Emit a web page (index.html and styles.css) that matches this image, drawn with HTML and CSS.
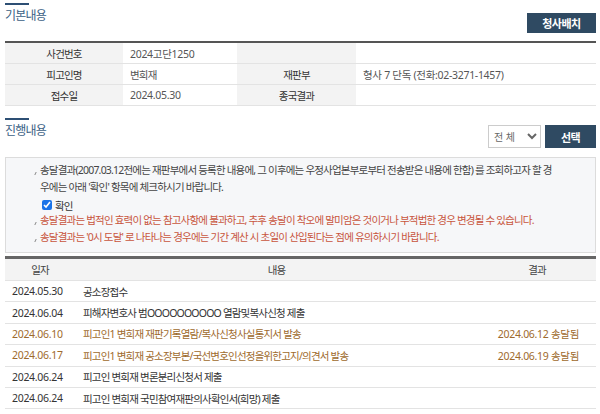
FILE: index.html
```html
<!DOCTYPE html>
<html lang="ko">

<head>
  <meta charset="UTF-8">
  <title>사건일반내용</title>
  <link rel="stylesheet" href="styles.css">
</head>

<body>
  <div class="wrap">

    <!-- 기본내용 -->
    <div class="sectionHead">
      <h2 class="subTitle">기본내용</h2>
      <button class="btnDark btnMap">청사배치</button>
    </div>

    <table class="infoTable">
      <colgroup>
        <col style="width:118px">
        <col style="width:114px">
        <col style="width:119px">
        <col>
      </colgroup>
      <tr>
        <th>사건번호</th>
        <td class="num">2024고단1250</td>
        <th></th>
        <td></td>
      </tr>
      <tr>
        <th>피고인명</th>
        <td>변희재</td>
        <th>재판부</th>
        <td class="num">형사 7 단독 (전화:02-3271-1457)</td>
      </tr>
      <tr>
        <th>접수일</th>
        <td class="num">2024.05.30</td>
        <th>종국결과</th>
        <td></td>
      </tr>
    </table>

    <!-- 진행내용 -->
    <div class="sectionHead second">
      <h2 class="subTitle">진행내용</h2>
      <div class="filter">
        <select class="selBox">
          <option>전 체</option>
        </select>
        <button class="btnDark btnSel">선택</button>
      </div>
    </div>

    <div class="notice">
      <ul class="first">
        <li>송달결과(2007.03.12전에는 재판부에서 등록한 내용에, 그 이후에는 우정사업본부로부터 전송받은 내용에 한함) 를 조회하고자 할 경우에는 아래 '확인' 항목에 체크하시기 바랍니다.</li>
      </ul>
      <label class="check"><input type="checkbox" checked> 확인</label>
      <ul class="red">
        <li>송달결과는 법적인 효력이 없는 참고사항에 불과하고, 추후 송달이 착오에 말미암은 것이거나 부적법한 경우 변경될 수 있습니다.</li>
        <li>송달결과는 '0시 도달' 로 나타나는 경우에는 기간 계산 시 초일이 산입된다는 점에 유의하시기 바랍니다.</li>
      </ul>
    </div>

    <table class="listTable">
      <colgroup>
        <col style="width:70px">
        <col>
        <col style="width:118px">
      </colgroup>
      <tr>
        <th>일자</th>
        <th>내용</th>
        <th>결과</th>
      </tr>
      <tr>
        <td class="num">2024.05.30</td>
        <td>공소장접수</td>
        <td></td>
      </tr>
      <tr>
        <td class="num">2024.06.04</td>
        <td>피해자변호사 범OOOOOOOOOO 열람및복사신청 제출</td>
        <td></td>
      </tr>
      <tr class="sent">
        <td class="num">2024.06.10</td>
        <td>피고인1 변희재 재판기록열람/복사신청사실통지서 발송</td>
        <td class="result">2024.06.12 송달됨</td>
      </tr>
      <tr class="sent">
        <td class="num">2024.06.17</td>
        <td>피고인1 변희재 공소장부본/국선변호인선정을위한고지/의견서 발송</td>
        <td class="result">2024.06.19 송달됨</td>
      </tr>
      <tr>
        <td class="num">2024.06.24</td>
        <td>피고인 변희재 변론분리신청서 제출</td>
        <td></td>
      </tr>
      <tr>
        <td class="num">2024.06.24</td>
        <td>피고인 변희재 국민참여재판의사확인서(희망) 제출</td>
        <td></td>
      </tr>
    </table>

  </div>
</body>

</html>
```

FILE: styles.css
```css
body {
  margin: 0;
  padding: 0;
  background: #fff;
  color: #444;
  font-family: 'Noto Sans', 'Noto Sans CJK KR', sans-serif;
  font-size: 10.5px;
  letter-spacing: -0.8px;
}

.wrap {
  padding: 0 4px 0 5px;
}

.sectionHead {
  display: flex;
  justify-content: space-between;
  align-items: flex-end;
  height: 36px;
  margin-bottom: 5px;
}

.sectionHead.second {
  height: 33px;
  margin-top: 9px;
  margin-bottom: 9px;
}

.subTitle {
  align-self: flex-start;
  position: relative;
  margin: 0;
  padding-top: 6px;
  font-size: 12px;
  font-weight: normal;
  line-height: 20px;
  letter-spacing: -0.8px;
  color: #3b5f85;
}

.subTitle::before {
  content: "";
  position: absolute;
  left: 0;
  top: 3px;
  width: 24px;
  height: 2px;
  background: #2d4f74;
}

.btnDark {
  border: none;
  background: #2f4a62;
  color: #fff;
  font-family: inherit;
  font-weight: bold;
  font-size: 11px;
  letter-spacing: -0.5px;
  cursor: pointer;
}

.btnMap {
  width: 69px;
  height: 20px;
  margin-bottom: 3px;
}

.filter {
  display: flex;
  gap: 4px;
}

.selBox {
  width: 53px;
  height: 23px;
  border: 1px solid #ccc;
  background: #fff;
  color: #666;
  font-family: inherit;
  font-size: 10px;
  padding: 0 1px;
}

.btnSel {
  width: 51px;
  height: 23px;
}

table {
  width: 100%;
  border-collapse: collapse;
  table-layout: fixed;
}

.num {
  letter-spacing: -0.3px;
}

.infoTable {
  border-top: 2px solid #555;
}

.infoTable th,
.infoTable td {
  height: 20px;
  padding: 0 7px;
  border-bottom: 1px solid #e3e3e3;
  text-align: left;
  color: #555;
}

.infoTable th {
  background: #f3f3f3;
  text-align: center;
  font-weight: normal;
  color: #333;
}

.notice {
  background: #f6f7f9;
  border: 1px solid #dcdcdc;
  padding: 4px 20px 6px 29px;
  margin-bottom: 3px;
}

.notice ul {
  list-style: none;
  margin: 0;
  padding: 0;
}

.notice ul.first {
  margin-right: 18px;
}

.notice li {
  position: relative;
  padding-left: 5px;
  line-height: 17px;
}

.notice li::before {
  content: "";
  position: absolute;
  left: 0;
  top: 10px;
  width: 1px;
  height: 3px;
  background: #888;
  transform: skewX(-25deg);
}

.notice .red li {
  color: #c8553d;
}

.check {
  display: flex;
  align-items: center;
  gap: 3px;
  height: 14px;
  margin: 2px 0 0 7px;
  color: #333;
}

.check input {
  margin: 0;
  width: 10px;
  height: 10px;
  accent-color: #1a73e8;
}

.listTable {
  border-top: 3px solid #666;
}

.listTable th,
.listTable td {
  height: 20.4px;
  padding: 0 7px;
  border-bottom: 1px solid #e3e3e3;
  text-align: left;
  color: #333;
}

.listTable td:nth-child(2) {
  padding-left: 8px;
}

.listTable th {
  height: 21px;
  background: #f3f3f3;
  text-align: center;
  font-weight: normal;
  color: #444;
}

.listTable tr .result {
  text-align: right;
  padding-right: 17px;
  letter-spacing: -0.3px;
}

.listTable tr.sent td {
  color: #9e6a2c;
}
```
